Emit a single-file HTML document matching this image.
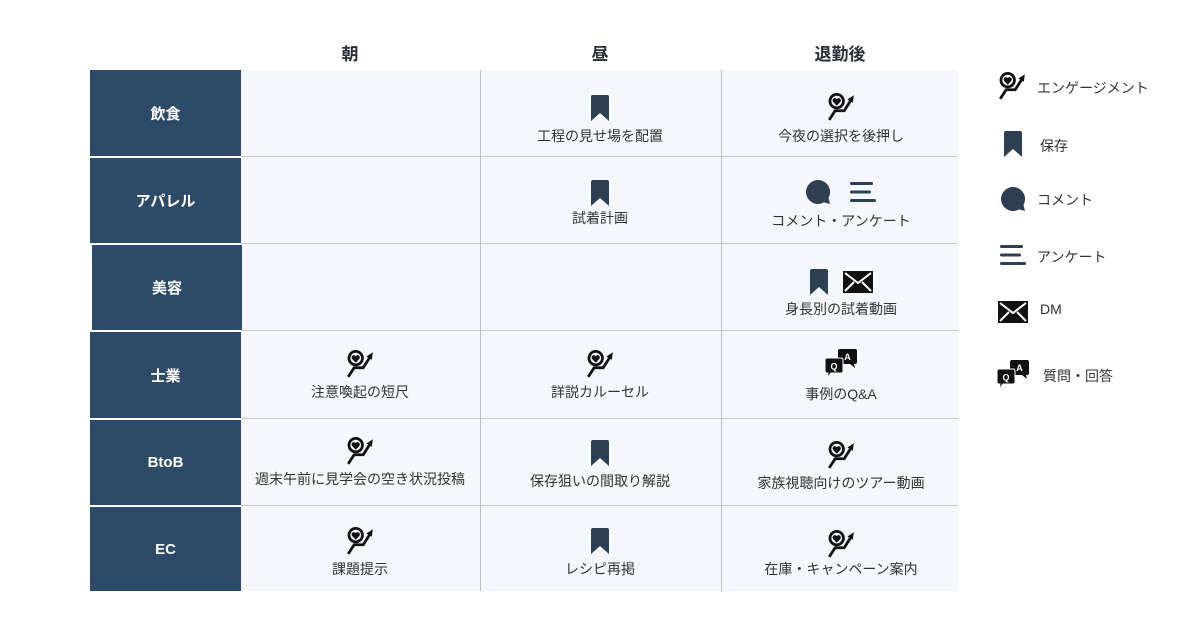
<!DOCTYPE html>
<html><head><meta charset="utf-8"><style>
body{margin:0;width:1200px;height:630px;background:#fff;position:relative;overflow:hidden;font-family:"Liberation Sans","Noto Sans CJK JP",sans-serif;color:#333}
.a{position:absolute}
.h{font-size:17px;font-weight:bold;color:#2a2f36;text-align:center;width:240px;top:40px}
.lab{background:#2d4b69;color:#fff;font-weight:bold;font-size:15px;display:flex;align-items:center;justify-content:center;left:90px;width:151px}
.cell{background:#f4f7fc}
.t{font-size:14px;color:#333;text-align:center;width:240px;white-space:nowrap}
.ic{display:flex;justify-content:center;gap:14px;width:240px}
.lg{font-size:14px;color:#333}
</style></head><body>
<svg width="0" height="0" style="position:absolute">
<defs>
<symbol id="eng" viewBox="0 0 28 28"><circle cx="10" cy="8.5" r="6.3" fill="none" stroke="#111" stroke-width="2.6"/><path d="M10 12.8 L6.6 9.2 A1.9 1.9 0 0 1 10 6.6 A1.9 1.9 0 0 1 13.4 9.2 Z" fill="#111"/><path d="M3 26 L8.5 17.5 L17 17.5 L23 8" fill="none" stroke="#111" stroke-width="2.6"/><path d="M20 7 L26 3 L25 10 Z" fill="#111"/></symbol>
<symbol id="bm" viewBox="0 0 20 26"><path d="M1 2 Q1 0 3 0 L17 0 Q19 0 19 2 L19 26 L10 18 L1 26 Z" fill="#2d3f52"/></symbol>
<symbol id="cm" viewBox="0 0 26 26"><path d="M13 1 A12 12 0 1 0 19 23.4 L25 25 L23.5 19 A12 12 0 0 0 13 1 Z" fill="#2d3f52"/></symbol>
<symbol id="ln" viewBox="0 0 28 22"><rect x="1" y="1" width="23" height="3" rx="1.5" fill="#2d3f52"/><rect x="1" y="9.5" width="21" height="3" rx="1.5" fill="#2d3f52"/><rect x="1" y="18" width="26" height="3" rx="1.5" fill="#2d3f52"/></symbol>
<symbol id="dm" viewBox="0 0 30 22"><rect x="0" y="0" width="30" height="22" fill="#111"/><path d="M2 2 L15 12 L28 2 M2 20 L11 11 M28 20 L19 11" fill="none" stroke="#fff" stroke-width="2"/></symbol>
<symbol id="qa" viewBox="0 0 32 30"><path d="M13 2 Q13 0 15 0 L30 0 Q32 0 32 2 L32 13 Q32 15 30 15 L29 15 L30 19 L25 15 L15 15 Q13 15 13 13 Z" fill="#111"/><text x="22.5" y="11" font-size="9" font-weight="bold" fill="#fff" text-anchor="middle" font-family="Liberation Sans">A</text><path d="M0 11 Q0 9 2 9 L16 9 Q18 9 18 11 L18 22 Q18 24 16 24 L6 24 L2 29 L3 24 L2 24 Q0 24 0 22 Z" fill="#111" stroke="#fff" stroke-width="1"/><text x="9" y="20.5" font-size="9" font-weight="bold" fill="#fff" text-anchor="middle" font-family="Liberation Sans">Q</text></symbol>
</defs></svg>

<div class="a h" style="left:230px">朝</div>
<div class="a h" style="left:480px">昼</div>
<div class="a h" style="left:720px">退勤後</div>

<div class="a cell" style="left:241px;top:70px;width:717px;height:521px"></div>
<div class="a" style="left:241px;top:156px;width:717px;height:1px;background:#c9c9c9"></div>
<div class="a" style="left:241px;top:243px;width:717px;height:1px;background:#c9c9c9"></div>
<div class="a" style="left:241px;top:330px;width:717px;height:1px;background:#c9c9c9"></div>
<div class="a" style="left:241px;top:418px;width:717px;height:1px;background:#c9c9c9"></div>
<div class="a" style="left:241px;top:505px;width:717px;height:1px;background:#c9c9c9"></div>
<div class="a" style="left:480px;top:70px;width:1px;height:521px;background:#c0c0c0"></div>
<div class="a" style="left:721px;top:70px;width:1px;height:521px;background:#c0c0c0"></div>

<div class="a lab" style="top:70px;height:86px">飲食</div>
<div class="a lab" style="top:158px;height:85px">アパレル</div>
<div class="a lab" style="top:245px;height:85px;left:92px;width:150px">美容</div>
<div class="a lab" style="top:332px;height:86px">士業</div>
<div class="a lab" style="top:420px;height:85px">BtoB</div>
<div class="a lab" style="top:507px;height:84px">EC</div>

<div class="a ic" style="left:480px;top:95px"><svg width="20" height="26"><use href="#bm"/></svg></div>
<div class="a t" style="left:480px;top:126px">工程の見せ場を配置</div>
<div class="a ic" style="left:721px;top:92px"><svg width="30" height="30"><use href="#eng"/></svg></div>
<div class="a t" style="left:721px;top:126px">今夜の選択を後押し</div>
<div class="a ic" style="left:480px;top:180px"><svg width="20" height="26"><use href="#bm"/></svg></div>
<div class="a t" style="left:480px;top:208px">試着計画</div>
<div class="a ic" style="left:721px;top:179px;gap:18px"><svg width="26" height="26"><use href="#cm"/></svg><svg width="28" height="22" style="margin-top:2px"><use href="#ln"/></svg></div>
<div class="a t" style="left:721px;top:211px">コメント・アンケート</div>
<div class="a ic" style="left:721px;top:269px;gap:14px"><svg width="20" height="26"><use href="#bm"/></svg><svg width="30" height="22" style="margin-top:2px"><use href="#dm"/></svg></div>
<div class="a t" style="left:721px;top:299px">身長別の試着動画</div>
<div class="a ic" style="left:240px;top:349px"><svg width="30" height="30"><use href="#eng"/></svg></div>
<div class="a t" style="left:240px;top:382px">注意喚起の短尺</div>
<div class="a ic" style="left:480px;top:349px"><svg width="30" height="30"><use href="#eng"/></svg></div>
<div class="a t" style="left:480px;top:382px">詳説カルーセル</div>
<div class="a ic" style="left:721px;top:349px"><svg width="32" height="30"><use href="#qa"/></svg></div>
<div class="a t" style="left:721px;top:384px">事例のQ&amp;A</div>
<div class="a ic" style="left:240px;top:436px"><svg width="30" height="30"><use href="#eng"/></svg></div>
<div class="a t" style="left:240px;top:469px">週末午前に見学会の空き状況投稿</div>
<div class="a ic" style="left:480px;top:440px"><svg width="20" height="26"><use href="#bm"/></svg></div>
<div class="a t" style="left:480px;top:471px">保存狙いの間取り解説</div>
<div class="a ic" style="left:721px;top:440px"><svg width="30" height="30"><use href="#eng"/></svg></div>
<div class="a t" style="left:721px;top:473px">家族視聴向けのツアー動画</div>
<div class="a ic" style="left:240px;top:526px"><svg width="30" height="30"><use href="#eng"/></svg></div>
<div class="a t" style="left:240px;top:559px">課題提示</div>
<div class="a ic" style="left:480px;top:528px"><svg width="20" height="26"><use href="#bm"/></svg></div>
<div class="a t" style="left:480px;top:559px">レシピ再掲</div>
<div class="a ic" style="left:721px;top:529px"><svg width="30" height="30"><use href="#eng"/></svg></div>
<div class="a t" style="left:721px;top:559px">在庫・キャンペーン案内</div>

<svg class="a" style="left:997px;top:71px" width="30" height="30"><use href="#eng"/></svg>
<div class="a lg" style="left:1037px;top:78px">エンゲージメント</div>
<svg class="a" style="left:1003px;top:131px" width="20" height="26"><use href="#bm"/></svg>
<div class="a lg" style="left:1040px;top:136px">保存</div>
<svg class="a" style="left:1000px;top:186px" width="26" height="26"><use href="#cm"/></svg>
<div class="a lg" style="left:1037px;top:190px">コメント</div>
<svg class="a" style="left:999px;top:244px" width="28" height="22"><use href="#ln"/></svg>
<div class="a lg" style="left:1037px;top:247px">アンケート</div>
<svg class="a" style="left:998px;top:301px" width="30" height="22"><use href="#dm"/></svg>
<div class="a lg" style="left:1040px;top:301px">DM</div>
<svg class="a" style="left:997px;top:360px" width="32" height="30"><use href="#qa"/></svg>
<div class="a lg" style="left:1043px;top:366px">質問・回答</div>
</body></html>
